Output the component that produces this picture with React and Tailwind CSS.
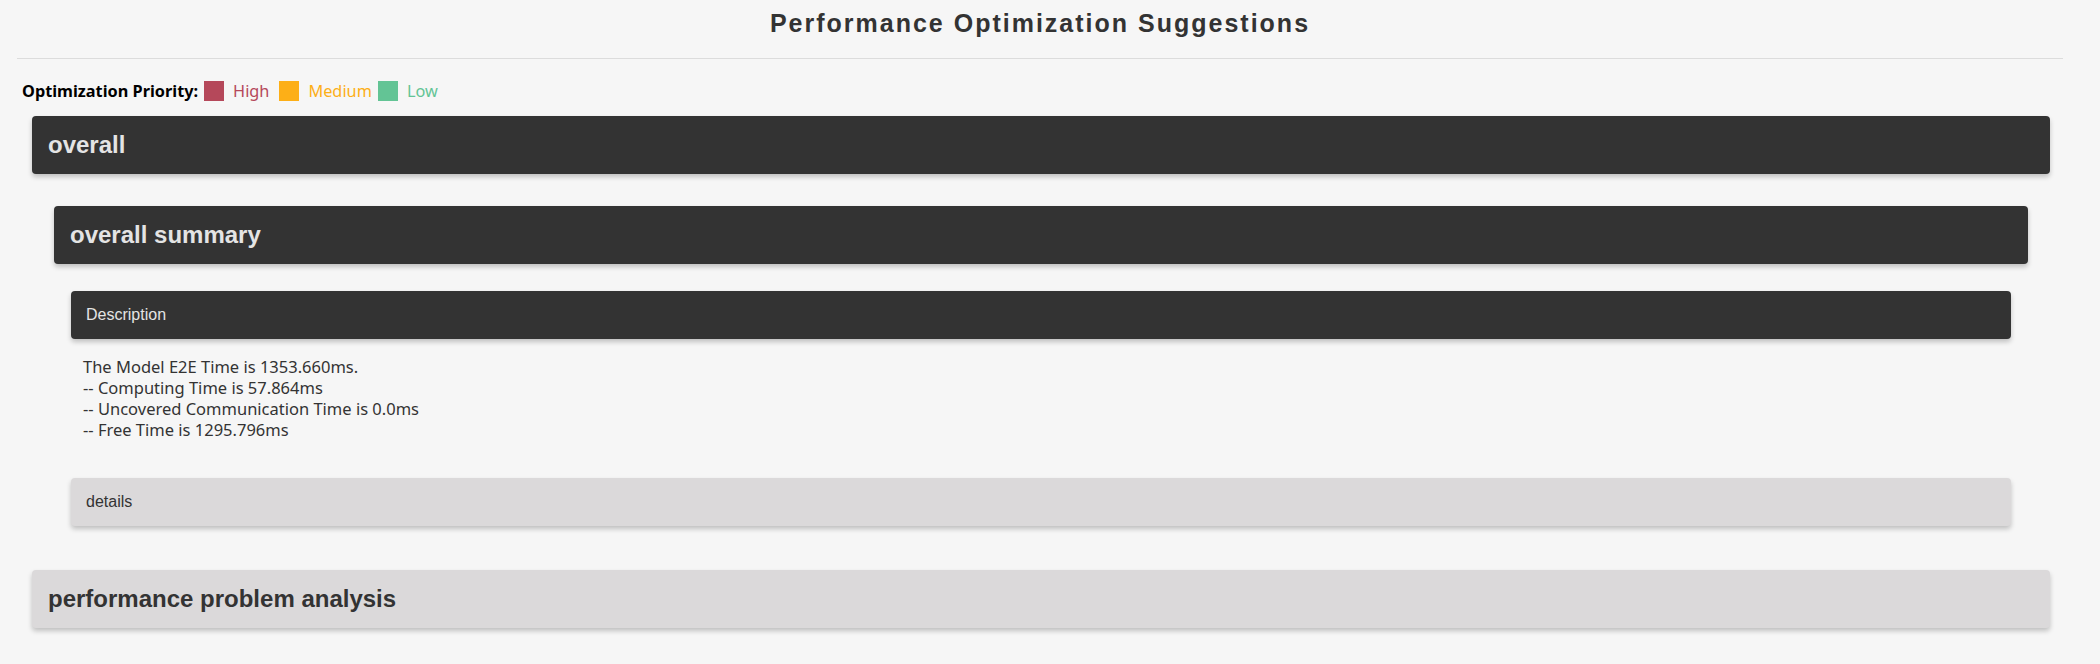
import React from "react";

const legend = [
  { label: "High", square: "bg-[#b5485a]", text: "text-[#b5485a]", after: "mr-[10px]" },
  { label: "Medium", square: "bg-[#fdaf17]", text: "text-[#fdaf17]", after: "mr-[6px]" },
  { label: "Low", square: "bg-[#63c495]", text: "text-[#63c495]", after: "" },
];

const lines = [
  "The Model E2E Time is 1353.660ms.",
  "-- Computing Time is 57.864ms",
  "-- Uncovered Communication Time is 0.0ms",
  "-- Free Time is 1295.796ms",
];

function Bar({ title, dark, big, className = "" }) {
  const tone = dark ? "bg-[#333333] text-[#e4e4e4]" : "bg-[#dbd9da] text-[#333333]";
  const size = big
    ? "h-[58px] pl-[16px] text-[24px] font-bold"
    : "h-[48px] pl-[15px] text-[16px]";
  return (
    <div
      className={`flex items-center rounded-[4px] shadow-[0_3px_5px_rgba(0,0,0,0.22)] ${tone} ${size} ${className}`}
      style={{ fontFamily: '"Liberation Sans", Arial, sans-serif' }}
    >
      {title}
    </div>
  );
}

export default function App() {
  return (
    <div className="min-h-screen bg-[#f6f6f6] pl-[17px] pr-[37px] pb-10 text-[#333333]">
      <h1
        className="h-[46px] text-center text-[25px] font-bold leading-[46px] tracking-[2px] text-[#333333]"
        style={{ fontFamily: '"Liberation Sans", Arial, sans-serif' }}
      >
        Performance Optimization Suggestions
      </h1>
      <div className="mt-[12px] h-px bg-[#dcdcdc]" />

      <div
        className="mt-[22px] flex h-[20px] items-center pl-[5px] text-[16.3px]"
        style={{ fontFamily: '"Noto Sans", sans-serif' }}
      >
        <span className="font-bold text-black">Optimization Priority:</span>
        <span className="ml-[6px]" />
        {legend.map((item) => (
          <React.Fragment key={item.label}>
            <span className={`h-[20px] w-[20px] ${item.square}`} />
            <span className={`ml-[9px] ${item.text} ${item.after}`}>{item.label}</span>
          </React.Fragment>
        ))}
      </div>

      <div className="mt-[15px] ml-[15px] mr-[13px]">
        <Bar title="overall" dark big />

        <div className="mx-[22px] mt-[32px]">
          <Bar title="overall summary" dark big />

          <div className="mx-[17px] mt-[27px]">
            <Bar title="Description" dark />
            <div
              className="mt-[17px] pl-[12px] text-[16.5px] leading-[21px] text-[#333333]"
              style={{ fontFamily: '"Noto Sans", sans-serif' }}
            >
              {lines.map((l) => (
                <div key={l}>{l}</div>
              ))}
            </div>
            <Bar title="details" className="mt-[38px]" />
          </div>
        </div>

        <Bar title="performance problem analysis" big className="mt-[44px]" />
      </div>
    </div>
  );
}
